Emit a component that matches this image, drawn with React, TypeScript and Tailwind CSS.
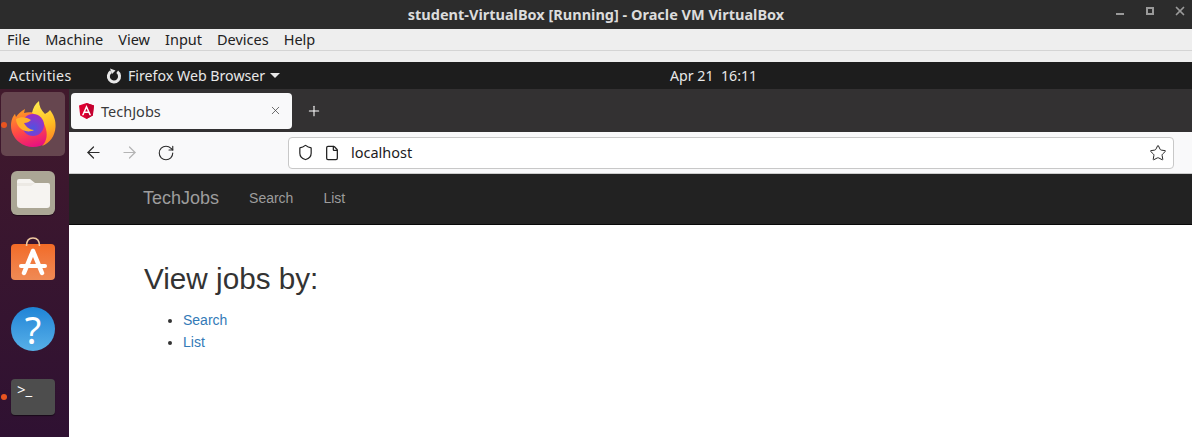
import React from 'react';
import { ArrowLeft, ArrowRight, RotateCw, Shield, File, Star, X, Plus } from 'lucide-react';

const ubuntu = 'font-["Noto_Sans",sans-serif]';
const arial = 'font-["Liberation_Sans",sans-serif]';

const FirefoxIcon = () => (
    <svg width="46" height="48" viewBox="0 0 46 48">
        <defs>
            <linearGradient id="ffBody" x1="0.2" y1="0" x2="0.55" y2="1">
                <stop offset="0" stopColor="#ffa21f" />
                <stop offset="0.55" stopColor="#ff4a45" />
                <stop offset="1" stopColor="#e8127f" />
            </linearGradient>
            <linearGradient id="ffFlame" x1="0.4" y1="0" x2="0.6" y2="1">
                <stop offset="0" stopColor="#ffe94d" />
                <stop offset="0.55" stopColor="#ffbc22" />
                <stop offset="1" stopColor="#ff7d26" />
            </linearGradient>
            <radialGradient id="ffGlobe" cx="0.5" cy="0.65" r="0.6">
                <stop offset="0" stopColor="#4f53e2" />
                <stop offset="1" stopColor="#9a30c4" />
            </radialGradient>
        </defs>
        <path d="M1 26 C1 20 3 16 5 14 L6 17 C8 14 11 11 15 9 L14 13 C20 11 30 13 36 20 C42 28 42 38 36 43 C29 48 17 49 9 42 C4 38 1 32 1 26 Z" fill="url(#ffBody)" />
        <path d="M29 1 C29 6 31 10 35 14 C36 13 39 12 40 10 C44 15 46 21 45.5 27 C45 36 40 43 32 46 C37 41 38 34 35 26 C33 20 28 15 22 13 C23 8 25 4 29 1 Z" fill="url(#ffFlame)" />
        <circle cx="23" cy="25" r="11" fill="url(#ffGlobe)" />
        <path d="M6 19 C11 16 17 17 21 20 C19 22 17 23 14 23 C16 27 20 30 24 30 C19 33 12 31 9 27 C7 24 6 22 6 19 Z" fill="#ffb02a" />
    </svg>
);

const FilesIcon = () => (
    <div className="flex h-[44px] w-[44px] items-center justify-center rounded-[6px] bg-[#aba695] shadow-[0_1px_1px_rgba(0,0,0,0.4)]">
        <svg width="33" height="29" viewBox="0 0 33 29">
            <path d="M2 0 H13 L18 4 H31 Q33 4 33 6 V26 Q33 29 30 29 H3 Q0 29 0 26 V2 Q0 0 2 0 Z" fill="#f6f4f1" />
            <path d="M0 4 H13 L18 4 L14 7 H0 Z" fill="#ece9e4" />
        </svg>
    </div>
);

const SoftwareIcon = () => (
    <div className="relative mt-[7px] h-[36px] w-[44px]">
        <svg className="absolute left-[14px] top-[-7px]" width="16" height="9" viewBox="0 0 16 9">
            <path d="M1.5 9 C1.5 3 4 1 8 1 C12 1 14.5 3 14.5 9" fill="none" stroke="#f0c9a0" strokeWidth="1.6" />
        </svg>
        <div className="h-full w-full rounded-[4px] bg-gradient-to-b from-[#f26b26] to-[#ef8a55]" />
        <svg className="absolute left-0 top-0" width="44" height="36" viewBox="0 0 44 36">
            <path d="M22 7 L13 29 M22 7 L31 29" stroke="#fff" strokeWidth="4.5" strokeLinecap="round" fill="none" />
            <rect x="8" y="20" width="28" height="4" rx="2" fill="#fff" />
        </svg>
    </div>
);

const HelpIcon = () => (
    <div className={`flex h-[44px] w-[44px] items-center justify-center rounded-full bg-gradient-to-b from-[#1d84d6] to-[#57b0e8] text-[38px] leading-none text-white ${ubuntu}`}>
        ?
    </div>
);

const TerminalIcon = () => (
    <div className={`h-[36px] w-[44px] rounded-[4px] bg-[#4d4d4d] pl-[6px] pt-[2px] text-[15px] leading-[16px] text-white shadow-[0_1px_1px_rgba(0,0,0,0.5)] ${ubuntu}`}>
        &gt;_
    </div>
);

const Dock = () => (
    <div className="flex w-[69px] shrink-0 flex-col bg-gradient-to-b from-[#41192c] to-[#2f1132]">
        <div className="relative ml-[1px] mt-[3px] flex h-[64px] w-[64px] items-center justify-center rounded-[5px] bg-[#66464f]">
            <FirefoxIcon />
        </div>
        <span className="absolute left-[1px] top-[122px] h-[6px] w-[6px] rounded-full bg-[#e95420]" />
        <div className="ml-[11px] mt-[15px]">
            <FilesIcon />
        </div>
        <div className="ml-[11px] mt-[22px]">
            <SoftwareIcon />
        </div>
        <div className="ml-[11px] mt-[27px]">
            <HelpIcon />
        </div>
        <div className="ml-[11px] mt-[28px]">
            <TerminalIcon />
        </div>
        <span className="absolute left-[1px] top-[394px] h-[6px] w-[6px] rounded-full bg-[#e95420]" />
    </div>
);

const AngularIcon = () => (
    <svg width="15" height="16" viewBox="0 0 15 16">
        <path d="M7.5 0 L15 2.6 L13.8 12.4 L7.5 16 L1.2 12.4 L0 2.6 Z" fill="#dd0031" />
        <path d="M7.5 0 L15 2.6 L13.8 12.4 L7.5 16 Z" fill="#c3002f" />
        <path d="M7.5 2 L2.9 12.2 H4.6 L5.5 9.9 H9.5 L10.4 12.2 H12.1 Z M8.8 8.5 H6.2 L7.5 5.4 Z" fill="#fff" />
    </svg>
);

const Browser = () => (
    <div className="flex min-w-0 flex-1 flex-col">
        <div className="flex h-[43px] items-center bg-[#333132] pl-[2px]">
            <div className="flex h-[36px] w-[221px] items-center rounded-[4px] bg-[#f9f9fa] pl-[8px] pr-[10px]">
                <AngularIcon />
                <span className={`ml-[7px] mt-[2px] flex-1 text-[14.5px] text-[#3a3a3c] ${ubuntu}`}>TechJobs</span>
                <X size={13} strokeWidth={1.4} className="text-[#444]" />
            </div>
            <Plus size={16} strokeWidth={1.6} className="ml-[14px] text-white" />
        </div>
        <div className="flex h-[42px] items-center border-b border-[#ccc] bg-[#f9f9fa]">
            <ArrowLeft size={19} strokeWidth={1.5} className="ml-[15px] text-[#2b2b2b]" />
            <ArrowRight size={19} strokeWidth={1.5} className="ml-[17px] text-[#b4b4b4]" />
            <RotateCw size={18} strokeWidth={1.5} className="ml-[18px] text-[#2b2b2b]" />
            <div className="ml-[113px] flex h-[32px] w-[886px] items-center rounded-[4px] border border-[#c8c8c8] bg-white pl-[8px] pr-[6px]">
                <Shield size={17} strokeWidth={1.7} className="text-[#222]" />
                <File size={16} strokeWidth={1.9} className="ml-[10px] text-[#222]" />
                <span className={`ml-[11px] mt-[1px] flex-1 text-[14.5px] text-[#1c1b22] ${ubuntu}`}>localhost</span>
                <Star size={18} strokeWidth={1.3} className="text-[#222]" />
            </div>
        </div>
        <div className={`flex h-[51px] items-center border-b border-[#080808] bg-[#222] pb-[2px] pl-[74px] ${arial}`}>
            <span className="text-[18px] text-[#9d9d9d]">TechJobs</span>
            <span className="ml-[30px] text-[14px] text-[#9d9d9d]">Search</span>
            <span className="ml-[30px] text-[14px] text-[#9d9d9d]">List</span>
        </div>
        <div className={`flex-1 bg-white pl-[75px] pt-[34px] text-[14px] text-[#333] ${arial}`}>
            <h1 className="text-[29.7px] leading-[39px]">View jobs by:</h1>
            <ul className="ml-[-1px] mt-[11px] list-disc pl-[40px] leading-[22px]">
                <li className="text-[#333]"><span className="text-[#337ab7]">Search</span></li>
                <li className="text-[#333]"><span className="text-[#337ab7]">List</span></li>
            </ul>
        </div>
    </div>
);

const App = () => {
    return (
        <div className="relative flex h-[437px] w-[1192px] flex-col overflow-hidden">
            <div className="relative flex h-[29px] items-center justify-center bg-[#2c2c2c]">
                <span className={`text-[14.5px] font-bold text-[#dcdcdc] ${ubuntu}`}>student-VirtualBox [Running] - Oracle VM VirtualBox</span>
                <span className="absolute left-[1116px] top-[13px] h-[2px] w-[8px] bg-[#9a9a9a]" />
                <span className="absolute left-[1146px] top-[7px] h-[8px] w-[8px] border-2 border-[#9a9a9a]" />
                <X size={14} strokeWidth={3} className="absolute left-[1173px] top-[4px] text-[#9a9a9a]" />
            </div>
            <div className={`flex h-[22px] items-center gap-[15px] border-b border-[#d4d4d4] bg-[#eee] pl-[7px] text-[14.5px] text-[#222] ${ubuntu}`}>
                <span>File</span>
                <span>Machine</span>
                <span>View</span>
                <span>Input</span>
                <span>Devices</span>
                <span>Help</span>
            </div>
            <div className="h-[11px] bg-[#eee]" />
            <div className={`relative flex h-[27px] items-center bg-[#1d1d1d] pl-[9px] text-[14.2px] text-[#e8e8e8] ${ubuntu}`}>
                <span className="w-[63px] tracking-[0.35px]">Activities</span>
                <svg className="ml-[34px]" width="16" height="16" viewBox="0 0 16 16">
                    <path d="M5 3.6 A5.6 5.6 0 1 0 11.2 3.8" fill="none" stroke="#e8e8e8" strokeWidth="3" />
                    <path d="M4 0.5 L9.5 2.5 L6 6 Z" fill="#e8e8e8" />
                </svg>
                <span className="ml-[6px]">Firefox Web Browser</span>
                <span className="ml-[5px] h-0 w-0 border-x-[5px] border-t-[5px] border-x-transparent border-t-[#e8e8e8]" />
                <span className="absolute left-[670px] whitespace-pre">Apr 21  16:11</span>
            </div>
            <div className="flex flex-1">
                <Dock />
                <Browser />
            </div>
        </div>
    );
};

export default App;
